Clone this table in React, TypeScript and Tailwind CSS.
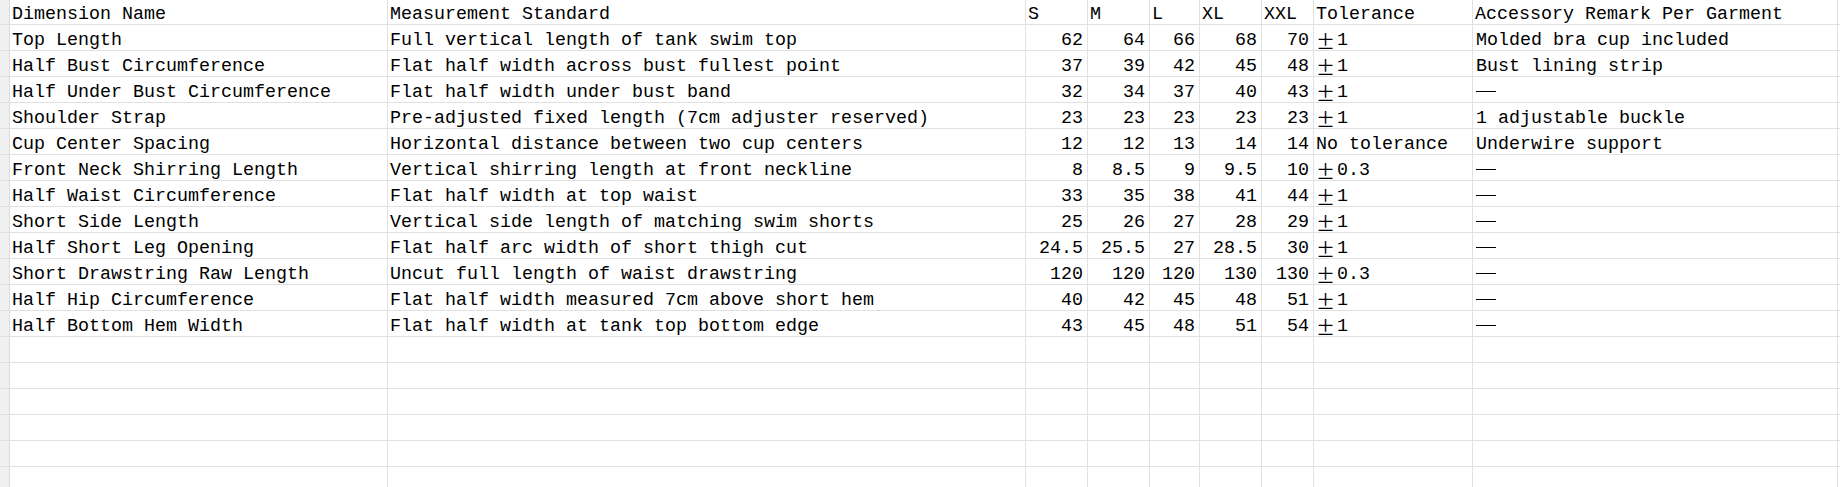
import React from "react";

type Row = {
  name: string;
  standard: string;
  sizes: string[];
  tolerance: string;
  remark: string;
};

const rows: Row[] = [
  { name: "Top Length", standard: "Full vertical length of tank swim top", sizes: ["62", "64", "66", "68", "70"], tolerance: "±1", remark: "Molded bra cup included" },
  { name: "Half Bust Circumference", standard: "Flat half width across bust fullest point", sizes: ["37", "39", "42", "45", "48"], tolerance: "±1", remark: "Bust lining strip" },
  { name: "Half Under Bust Circumference", standard: "Flat half width under bust band", sizes: ["32", "34", "37", "40", "43"], tolerance: "±1", remark: "—" },
  { name: "Shoulder Strap", standard: "Pre-adjusted fixed length (7cm adjuster reserved)", sizes: ["23", "23", "23", "23", "23"], tolerance: "±1", remark: "1 adjustable buckle" },
  { name: "Cup Center Spacing", standard: "Horizontal distance between two cup centers", sizes: ["12", "12", "13", "14", "14"], tolerance: "No tolerance", remark: "Underwire support" },
  { name: "Front Neck Shirring Length", standard: "Vertical shirring length at front neckline", sizes: ["8", "8.5", "9", "9.5", "10"], tolerance: "±0.3", remark: "—" },
  { name: "Half Waist Circumference", standard: "Flat half width at top waist", sizes: ["33", "35", "38", "41", "44"], tolerance: "±1", remark: "—" },
  { name: "Short Side Length", standard: "Vertical side length of matching swim shorts", sizes: ["25", "26", "27", "28", "29"], tolerance: "±1", remark: "—" },
  { name: "Half Short Leg Opening", standard: "Flat half arc width of short thigh cut", sizes: ["24.5", "25.5", "27", "28.5", "30"], tolerance: "±1", remark: "—" },
  { name: "Short Drawstring Raw Length", standard: "Uncut full length of waist drawstring", sizes: ["120", "120", "120", "130", "130"], tolerance: "±0.3", remark: "—" },
  { name: "Half Hip Circumference", standard: "Flat half width measured 7cm above short hem", sizes: ["40", "42", "45", "48", "51"], tolerance: "±1", remark: "—" },
  { name: "Half Bottom Hem Width", standard: "Flat half width at tank top bottom edge", sizes: ["43", "45", "48", "51", "54"], tolerance: "±1", remark: "—" },
];

const sizeLabels = ["S", "M", "L", "XL", "XXL"];
const sizeWidths = ["w-[62px]", "w-[62px]", "w-[50px]", "w-[62px]", "w-[52px]"];

const cellBase = "shrink-0 h-full border-r border-[#e1e1e1] flex items-end whitespace-nowrap";

// ± and — are full-width in the sheet's font
const Tol = ({ value }: { value: string }) => {
  if (!value.startsWith("±")) return <span>{value}</span>;
  return (
    <span className="flex items-end">
      <span className="inline-block w-[21px] font-['Noto_Sans_CJK_SC',sans-serif] text-[19px] leading-none [font-feature-settings:'fwid']">
        ±
      </span>
      <span>{value.slice(1)}</span>
    </span>
  );
};

const Remark = ({ value }: { value: string }) =>
  value === "—" ? (
    <span className="inline-block w-[20px] h-[15px] relative">
      <span className="absolute left-0 top-[4px] w-[20px] h-[1px] bg-black" aria-label="—" />
    </span>
  ) : (
    <span>{value}</span>
  );

const Gutter = () => <div className="w-[10px] shrink-0 h-full bg-[#f0f0f0] border-r border-[#dcdcdc]" />;

export default function App() {
  return (
    <div className="h-[487px] w-[1840px] overflow-hidden bg-white text-black font-['Liberation_Mono',monospace] text-[18.33px] leading-none">
      {/* header */}
      <div className="flex h-[25px] border-b border-[#e1e1e1]">
        <Gutter />
        <div className={`${cellBase} w-[378px] pl-[2px]`}>Dimension Name</div>
        <div className={`${cellBase} w-[638px] pl-[2px]`}>Measurement Standard</div>
        {sizeLabels.map((s, i) => (
          <div key={s} className={`${cellBase} ${sizeWidths[i]} pl-[2px]`}>
            {s}
          </div>
        ))}
        <div className={`${cellBase} w-[159px] pl-[2px]`}>Tolerance</div>
        <div className={`${cellBase} w-[365px] pl-[2px]`}>Accessory Remark Per Garment</div>
        <div className="flex-1" />
      </div>

      {rows.map((r) => (
        <div key={r.name} className="flex h-[26px] border-b border-[#e1e1e1]">
          <Gutter />
          <div className={`${cellBase} w-[378px] pl-[2px]`}>{r.name}</div>
          <div className={`${cellBase} w-[638px] pl-[2px]`}>{r.standard}</div>
          {r.sizes.map((v, i) => (
            <div key={i} className={`${cellBase} ${sizeWidths[i]} justify-end pr-[4px]`}>
              {v}
            </div>
          ))}
          <div className={`${cellBase} w-[159px] pl-[2px]`}>
            <Tol value={r.tolerance} />
          </div>
          <div className={`${cellBase} w-[365px] pl-[3px]`}>
            <Remark value={r.remark} />
          </div>
          <div className="flex-1" />
        </div>
      ))}

      {Array.from({ length: 6 }).map((_, k) => (
        <div key={k} className="flex h-[26px] border-b border-[#e1e1e1]">
          <Gutter />
          <div className={`${cellBase} w-[378px]`} />
          <div className={`${cellBase} w-[638px]`} />
          {sizeWidths.map((w, i) => (
            <div key={i} className={`${cellBase} ${w}`} />
          ))}
          <div className={`${cellBase} w-[159px]`} />
          <div className={`${cellBase} w-[365px]`} />
          <div className="flex-1" />
        </div>
      ))}
    </div>
  );
}
